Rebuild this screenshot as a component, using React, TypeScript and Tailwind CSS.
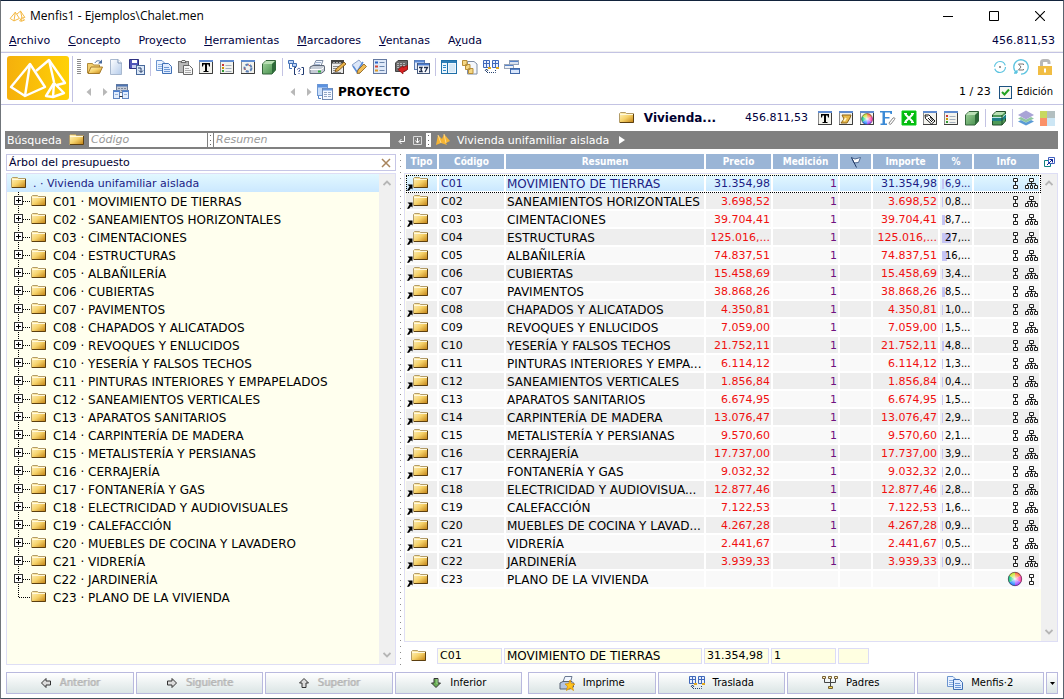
import React, { useState } from "react";

type Kids = { children?: React.ReactNode };

function Icon({ children }: Kids) {
  return (
    <svg viewBox="0 0 16 16" className="block h-4 w-4 shrink-0" aria-hidden="true">
      {children}
    </svg>
  );
}

function SharedGradients() {
  return (
    <svg className="absolute h-0 w-0" aria-hidden="true">
      <defs>
        <linearGradient id="gFolder" x1="0" y1="0" x2="1" y2="1">
          <stop offset="0" stopColor="#fff4c4" />
          <stop offset="0.5" stopColor="#f6d26a" />
          <stop offset="1" stopColor="#c07f12" />
        </linearGradient>
        <linearGradient id="gCube" x1="0" y1="0" x2="1" y2="1">
          <stop offset="0" stopColor="#a5d6a0" />
          <stop offset="1" stopColor="#3f8a46" />
        </linearGradient>
        <linearGradient id="gLogo" x1="0" y1="0" x2="1" y2="0">
          <stop offset="0" stopColor="#f5b00c" />
          <stop offset="1" stopColor="#ffd106" />
        </linearGradient>
        <linearGradient id="gPage" x1="0" y1="0" x2="1" y2="1">
          <stop offset="0" stopColor="#ffffff" />
          <stop offset="1" stopColor="#b4cbea" />
        </linearGradient>
        <radialGradient id="gWhite">
          <stop offset="0" stopColor="#ffffff" stopOpacity="0.9" />
          <stop offset="1" stopColor="#ffffff" stopOpacity="0" />
        </radialGradient>
      </defs>
    </svg>
  );
}

const folderShape = (
  <>
    <path d="M.5 12.500V3.500L1.500 2.500H6.500L7.500 3.500H14.500V12.500Z" fill="url(#gFolder)" stroke="#b39c68" />
    <path d="M1 4.500H14" stroke="#fff8dc" />
    <path d="M1 12.500H14.500V4" fill="none" stroke="#5c3f10" />
  </>
);

const FolderIcon = () => <Icon>{folderShape}</Icon>;

function LinkedFolderIcon() {
  return (
    <svg viewBox="0 0 22 16" className="block h-4 w-[22px] shrink-0" aria-hidden="true">
      <g transform="translate(7 0)">{folderShape}</g>
      <path d="M1.500 9.500H6.500V14.500L5 13.200L3 15.700H1L3.500 11.500Z" fill="#000" />
    </svg>
  );
}

function Frame({ children }: Kids) {
  return (
    <Icon>
      <rect x="1.500" y="1.500" width="13" height="13" fill="#f3f3ee" stroke="#8a8a8a" />
      <path d="M1 14.500H14.500V2" fill="none" stroke="#3c3c3c" />
      <path d="M1 2H15" stroke="#5f8bd0" strokeWidth="2" />
      {children}
    </Icon>
  );
}

const TextIcon = () => (
  <Frame>
    <path d="M4 4H12V7.500H11L10.500 5.500H9V12H10.500V13H5.500V12H7V5.500H5.500L5 7.500H4Z" fill="#000" />
  </Frame>
);
const ListIcon = () => (
  <Frame>
    <path d="M3 6H5" stroke="#c33" strokeWidth="2" />
    <path d="M3 9H5" stroke="#c90" strokeWidth="2" />
    <path d="M3 12H5" stroke="#393" strokeWidth="2" />
    <path d="M6.500 6.500H12.500M6.500 9.500H12.500M6.500 12.500H12.500" stroke="#a4aebc" />
  </Frame>
);
const CycleIcon = () => (
  <Frame>
    <circle cx="8" cy="9" r="3.500" fill="none" stroke="#5b7fb5" strokeWidth="2" strokeDasharray="3 1.500" />
    <path d="M8 5.500l2 1.500M4.500 9l1 2" stroke="#b55" />
  </Frame>
);
const ScrollIcon = () => (
  <Frame>
    <path d="M4 5H13L12 8L9 13H3L6 9Z" fill="#e8b94a" stroke="#8d6418" />
    <path d="M8 8L6 11" stroke="#fff3c0" strokeWidth="2" />
  </Frame>
);
const TagIcon = () => (
  <Frame>
    <path d="M3 5L7 5L13 11L9.500 14L3.500 8.500Z" fill="#fff" stroke="#111" />
    <path d="M6 8l4 4M8 7l3 4M4.500 6.500h1" stroke="#111" />
  </Frame>
);

function ColourBall() {
  return (
    <>
      <path d="M8 8V1A7 7 0 0 1 14 4.500Z" fill="#ff7a3c" />
      <path d="M8 8L14 4.500A7 7 0 0 1 14 11.500Z" fill="#ff48a8" />
      <path d="M8 8L14 11.500A7 7 0 0 1 8 15Z" fill="#a050ff" />
      <path d="M8 8V15A7 7 0 0 1 2 11.500Z" fill="#2d8cff" />
      <path d="M8 8L2 11.500A7 7 0 0 1 2 4.500Z" fill="#22d08a" />
      <path d="M8 8L2 4.500A7 7 0 0 1 8 1Z" fill="#c8e838" />
      <circle cx="8" cy="8" r="6" fill="url(#gWhite)" />
      <circle cx="8" cy="8" r="6.700" fill="none" stroke="#503050" strokeWidth=".7" />
    </>
  );
}
const BallIcon = () => (
  <Icon>
    <ColourBall />
  </Icon>
);
const ColourIcon = () => (
  <Frame>
    <g transform="translate(1.500 2.500) scale(.82)">
      <ColourBall />
    </g>
  </Frame>
);
const CubeIcon = () => (
  <Icon>
    <path d="M1.500 5L5 1.500H14.500V11L11 15H1.500Z" fill="url(#gCube)" stroke="#33633a" />
    <path d="M2 5L5 2H14L11 5Z" fill="#b9dfb4" />
    <path d="M11 5L14.500 1.800V11L11 14.500Z" fill="#2d6a38" />
  </Icon>
);
const SlicedCubeIcon = () => (
  <Icon>
    <path d="M1.500 5L5 1.500H14.500V11L11 15H1.500Z" fill="#4f9a58" stroke="#234d2b" />
    <path d="M2 5L5 2H14L11 5Z" fill="#b9dfb4" />
    <path d="M1 8H11L15 4.500V8L11 11H1Z" fill="#1d7f86" />
    <path d="M1 7.500H11L15 4" fill="none" stroke="#bfe6e8" />
    <path d="M11 5V15" stroke="#234d2b" />
  </Icon>
);
const OpenIcon = () => (
  <Icon>
    <path d="M.5 14V4.500H5.500L6.500 6H12.500V8" fill="#f3cf6e" stroke="#b08a3a" />
    <path d="M1 14.500L4 8H15.500L12.500 14.500Z" fill="url(#gFolder)" stroke="#a67a28" />
    <path d="M8 4C9 1.500 12 1 14 3" fill="none" stroke="#46689c" />
    <path d="M15 .5V4.500H11Z" fill="#46689c" />
  </Icon>
);
const NewIcon = () => (
  <Icon>
    <path d="M2.500 .5H10L13.500 4V15.500H2.500Z" fill="url(#gPage)" stroke="#a9b9cf" />
    <path d="M10 .5V4H13.500" fill="#fff" stroke="#7d94b5" />
  </Icon>
);
const SaveIcon = () => (
  <Icon>
    <path d="M.5 .5H9.500V9.500H.5Z" fill="#4f55b8" stroke="#2d3180" />
    <path d="M3 1H8V4H3Z" fill="#fff" />
    <path d="M3 6H7V9H3Z" fill="#c9cdf0" />
    <rect x="7.500" y="6.500" width="8" height="9" fill="#dbe8f8" stroke="#49699b" />
    <path d="M9 9H12V13M10 11.500L12 13.500L14 11.500" fill="none" stroke="#223a66" />
  </Icon>
);
const CopyIcon = () => (
  <Icon>
    <path d="M.5 1.500H6L8.500 4V11.500H.5Z" fill="#e9f2ff" stroke="#6b94cf" />
    <path d="M2 5.500H6M2 7.500H6M2 9.500H6" stroke="#8db0e0" />
    <path d="M6.500 4.500H12.500L15.500 7.500V14.500H6.500Z" fill="#e0ecff" stroke="#3f6fb4" />
    <path d="M8 8.500H13M8 10.500H14M8 12.500H14" stroke="#6c98d6" />
  </Icon>
);
const PasteIcon = () => (
  <Icon>
    <rect x="1.500" y="2.500" width="10" height="11" fill="#b9b9b9" stroke="#777" />
    <path d="M4 3.500L5 1.500H8L9 3.500Z" fill="#eee" stroke="#666" />
    <path d="M6.500 6.500H12.500L15.500 9.500V15.500H6.500Z" fill="#f6f6f6" stroke="#666" />
    <path d="M8 9.500H12M8 11.500H14M8 13.500H14" stroke="#aaa" />
  </Icon>
);
const QueryIcon = () => (
  <Icon>
    <path d="M.5 1.500H5.500V4.500H.5ZM4.500 4.500H8.500V7.500H4.500Z" fill="#bcd3f7" stroke="#4471b5" />
    <path d="M1.500 5V9.500H4" fill="none" stroke="#4471b5" />
    <path d="M8 8.500H6.500V15.500H8M13.500 8.500H15.500V15.500H13.500" fill="none" stroke="#203a70" />
    <path d="M9.500 10.500C9.500 9 12.500 9 12.300 10.500L11 12V13M11 14V15" fill="none" stroke="#3c50a0" />
  </Icon>
);
const PrinterIcon = () => (
  <Icon>
    <path d="M4.500 7L7 1.500H14L12 7Z" fill="#f2f7ff" stroke="#7e8ca4" />
    <path d="M7 3.500H12M6 5.500H11" stroke="#9fb2d0" />
    <path d="M1 8L4 6.500H15L15.500 8V12L12 14.500H1Z" fill="#c6ccd6" stroke="#5f6878" />
    <path d="M1 10.500H12L15 8.500" fill="none" stroke="#fff" />
    <path d="M9 12.500H12" stroke="#2fae3c" strokeWidth="2" />
  </Icon>
);
const PrintStarIcon = () => (
  <Icon>
    <path d="M4 7L6 1.500H13L11.500 7Z" fill="#f2f7ff" stroke="#697891" />
    <path d="M1 8L4 6.500H13L14.500 8V12L11 14H1Z" fill="#b4c4e0" stroke="#596272" />
    <path d="M11 5L12.300 8.500L16 9L13.300 11.300L14.500 15.500L11 13L7.500 15.500L8.500 11.300L6 9L9.700 8.500Z" fill="#ffc41a" stroke="#d68b00" strokeWidth=".7" />
  </Icon>
);
const EditIcon = () => (
  <Icon>
    <rect x="1.500" y="1.500" width="12" height="13" fill="#ececec" stroke="#444" />
    <path d="M1 3H14" stroke="#444" strokeWidth="3" />
    <path d="M3 3.500H12" stroke="#aaa" strokeDasharray="2 1" />
    <path d="M3 7.500H11M3 9.500H9M3 11.500H7M3 13.500H11" stroke="#888" />
    <path d="M5 12.500L6 10L14 3L16 5L8 12Z" fill="#eab44a" stroke="#70460b" strokeWidth=".8" />
  </Icon>
);
const CheckPencilIcon = () => (
  <Icon>
    <path d="M1 6L8 1L14 8L8 15Z" fill="#dbe6f8" stroke="#8aa2ca" />
    <path d="M2 7L6 13L12 3" fill="none" stroke="#5c8cd4" strokeWidth="1.500" />
    <path d="M6 14.500L7 11L13 5L15.500 7.500L9 14Z" fill="#f0bd57" stroke="#8c5f1b" strokeWidth=".8" />
  </Icon>
);
const ReportIcon = () => (
  <Icon>
    <rect x="1.500" y=".5" width="13" height="14" fill="#dfe9f8" stroke="#6479a0" />
    <path d="M3 3.500H6" stroke="#2c62c4" strokeWidth="2" />
    <path d="M3 7.500H6" stroke="#d24636" strokeWidth="2" />
    <path d="M3 11.500H6" stroke="#dc9a24" strokeWidth="2" />
    <path d="M7.500 3.500H12.500M7.500 7.500H12.500M7.500 11.500H12.500" stroke="#6c86ad" />
  </Icon>
);
const BookArrowIcon = () => (
  <Icon>
    <path d="M2.500 4L5 1.500H14.500V10L12 12.500H2.500Z" fill="#6a6a6a" stroke="#444" />
    <path d="M4 4.500H13M4 6.500H13M4 8.500H7" stroke="#b5b5b5" strokeDasharray="2 1" />
    <path d="M5 10.500L10 7V8.500L14.500 6.500V10.500L10 13V15Z" fill="#d92222" stroke="#8c0f0f" strokeWidth=".7" />
  </Icon>
);
const CalendarIcon = () => (
  <Icon>
    <rect x=".5" y="1.500" width="10" height="9" fill="#dfe9fa" stroke="#5a7ab0" />
    <path d="M1 2.500H10" stroke="#5a8ad8" strokeWidth="2" />
    <rect x="3.500" y="4.500" width="12" height="10" fill="#f7f9fd" stroke="#44577a" />
    <path d="M4 5.500H15" stroke="#4a7cd0" strokeWidth="2" />
    <path d="M5 8.500H8L7 10.500L8 12.500H5M10 8.500H13.500L11 13" fill="none" stroke="#1d2c4a" strokeWidth="1.300" />
  </Icon>
);
const PanelsIcon = () => (
  <Icon>
    <rect x=".5" y="1.500" width="15" height="13" fill="#eef6fc" stroke="#1f6fa8" />
    <path d="M1 3H15" stroke="#2f7fb8" strokeWidth="2" />
    <path d="M6.500 3V14" stroke="#1f6fa8" />
    <path d="M2 6.500H5M2 8.500H5M2 11.500H5" stroke="#2f89c8" />
    <rect x="8" y="5" width="6" height="8" fill="#d6e8f6" />
  </Icon>
);
const FoldersPageIcon = () => (
  <Icon>
    <path d="M5.500 2.500H12L15 5V15H5.500Z" fill="#f4f7fc" stroke="#7f8da4" />
    <path d="M.5 1.500H5V6.500H.5ZM3.500 5.500H8V10.500H3.500ZM6.500 9.500H11V14.500H6.500Z" fill="#f6d783" stroke="#b88e38" />
  </Icon>
);
const TransferIcon = () => (
  <Icon>
    <path d="M.5 1.500H6.500V8.500H.5ZM9.500 1.500H15.500V8.500H9.500Z" fill="#e7efff" stroke="#4068ba" />
    <path d="M3.500 1V9M12.500 1V9M1 4.500H6M10 4.500H15" stroke="#4068ba" />
    <path d="M5 9H8M13 9H16" stroke="#e3a81e" strokeWidth="2" />
    <path d="M3.500 10V13.500H12.500V11" fill="none" stroke="#26426f" strokeDasharray="1 1" />
    <path d="M2 12L3.500 10L5 12" fill="none" stroke="#26426f" />
  </Icon>
);
const CascadeIcon = () => (
  <Icon>
    <rect x="5.500" y="1.500" width="9" height="4" fill="#dbe3f0" stroke="#8f9fba" />
    <rect x=".5" y="5.500" width="9" height="4" fill="#eef2f8" stroke="#9aa5b8" />
    <rect x="6.500" y="9.500" width="9" height="5" fill="#d8e6fc" stroke="#4068a8" />
    <path d="M6 2.500H14M1 6.500H9M7 10.500H15" stroke="#5683ca" />
  </Icon>
);
const FormsIcon = () => (
  <Icon>
    <rect x="3.500" y=".5" width="11" height="8" fill="#c5cbd6" stroke="#727e92" />
    <path d="M3 1.500H15" stroke="#4e75b2" strokeWidth="2" />
    <path d="M5 4.500H14M5 6.500H14" stroke="#7c8798" strokeDasharray="2 1" />
    <rect x=".5" y="6.500" width="6" height="8" fill="#e2edfd" stroke="#5f85c0" />
    <rect x="9.500" y="6.500" width="6" height="8" fill="#e2edfd" stroke="#5f85c0" />
    <path d="M1 7.500H6M10 7.500H15" stroke="#4a80d4" />
    <path d="M2 10.500H5M11 10.500H14" stroke="#9ab2d8" />
    <path d="M6.500 12.500H9.500" stroke="#333" />
  </Icon>
);
const SheetsIcon = () => (
  <Icon>
    <rect x=".5" y=".5" width="10" height="11" fill="#c9defa" stroke="#6f98d2" />
    <path d="M1 2H10" stroke="#5c92e0" strokeWidth="3" />
    <rect x="5.500" y="4.500" width="10" height="11" fill="#f4f8ff" stroke="#6f88b0" />
    <path d="M6 5.500H15" stroke="#6b9ae0" strokeWidth="2" />
    <path d="M7 8.500H14M7 10.500H14M7 12.500H14" stroke="#92a6c4" strokeDasharray="3 1" />
    <path d="M1.500 12V14.500H4" fill="none" stroke="#5585c8" />
  </Icon>
);
const FontClipIcon = () => (
  <Icon>
    <path d="M0 1H12V4H10.500L10 2.500H5V7H9.500V8.500H5V13.500H7V15H.5V13.500H2.500V2.500H0Z" fill="#3b8ad6" />
    <path d="M9 13L13 8C14.500 7 15.500 8.500 14.500 9.500L11 14C10 15 8.500 14 9.500 12.500" fill="none" stroke="#888" />
  </Icon>
);
const SpreadsheetIcon = () => (
  <Icon>
    <rect x="1" y="1" width="14" height="14" fill="#04b910" />
    <path d="M1 1H15V15H1Z" fill="none" stroke="#08cf18" />
    <path d="M4 4L12 12M12 4L4 12" stroke="#fff" strokeWidth="2" />
    <path d="M3 3.500H6M10 3.500H13M3 12.500H6M10 12.500H13" stroke="#fff" />
  </Icon>
);
const LayersIcon = () => (
  <Icon>
    <path d="M0 11.500L8 15.500L16 11.500L13 10L8 12.500L3 10Z" fill="#5a9bd5" />
    <path d="M0 8.500L8 12.500L16 8.500L13 7L8 9.500L3 7Z" fill="#8fc7a0" />
    <path d="M0 5L8 .5L16 5L8 9.500Z" fill="#a9a4d6" />
  </Icon>
);
const TilesIcon = () => (
  <Icon>
    <path d="M1 1H8V8H1Z" fill="#c7d860" />
    <path d="M8 1H16V8H8Z" fill="#b3bfc0" />
    <path d="M1 8H8V16H1Z" fill="#fb9168" />
    <path d="M8 8H16V16H8Z" fill="#cde6f4" />
  </Icon>
);
const LockIcon = () => (
  <Icon>
    <path d="M4.500 8V3.500Q4.500 1.500 6.500 1.500H10Q12 1.500 12 3.500V5" fill="none" stroke="#b8b8b8" strokeWidth="3" />
    <path d="M1 7H15V16H1Z" fill="#f1bd43" />
    <path d="M8 9.500V13.500" stroke="#fff" strokeWidth="2" />
  </Icon>
);

const PyramidLines = ({ colour, width }: { colour: string; width: number }) => (
  <g fill="none" stroke={colour} strokeWidth={width} strokeLinejoin="round">
    <path d="M23 8L4 31L18 40L38 31Z" />
    <path d="M23 8L18 40" />
    <path d="M29 15L42 4L58 27L50 29" />
    <path d="M42 4L47 26" />
    <path d="M47 27L39 40L46 41L57 37Z" />
    <path d="M47 27L46 41" />
  </g>
);

const Arrow = ({ dir, green }: { dir: "left" | "right" | "up" | "down"; green?: boolean }) => {
  const turn = { left: 180, right: 0, up: -90, down: 90 }[dir];
  return (
    <svg viewBox="0 0 12 12" className="block h-3 w-3" aria-hidden="true">
      <g transform={`rotate(${turn} 6 6)`}>
        <path d="M1.500 4H6V1.500L10.500 6L6 10.500V8H1.500Z" fill={green ? "#68ad54" : "#dcdcdc"} stroke="#333" />
        {green ? <path d="M2 5H7" stroke="#a8dc98" /> : null}
      </g>
    </svg>
  );
};

const ParentsIcon = () => (
  <Icon>
    <path d="M.5 1.500H3.500V3.500H.5ZM6.500 1.500H9.500V3.500H6.500ZM12.500 1.500H15.500V3.500H12.500Z" fill="#fff3b8" stroke="#77603a" />
    <path d="M2.500 4V7.500H13.500V4M8.500 4V11" fill="none" stroke="#444" />
    <path d="M6.500 11.500H10.500V13.500H6.500Z" fill="#f6e04a" stroke="#77603a" />
  </Icon>
);
const OrgIcon = () => (
  <Icon>
    <path d="M6.500 3.500H10.500V6.500H6.500ZM2.500 10.500H5.500V13.500H2.500ZM7.500 10.500H9.500V13.500H7.500ZM11.500 10.500H14.500V13.500H11.500Z" fill="#fff" stroke="#222" />
    <path d="M8.500 7V10M4.500 10V8.500H12.500V10" fill="none" stroke="#222" />
  </Icon>
);
const LinkIcon = () => (
  <Icon>
    <path d="M6.500 3.500H10.500V6.500H6.500ZM6.500 10.500H10.500V13.500H6.500Z" fill="#fff" stroke="#222" />
    <path d="M8.500 7V10" stroke="#222" />
  </Icon>
);

function Nav({ label, back }: { label: string; back?: boolean }) {
  return (
    <button aria-label={label} className="flex h-4 w-[15px] items-center justify-center">
      <svg viewBox="0 0 8 8" className="h-2 w-2">
        <path d={back ? "M6 0V8L1.500 4Z" : "M2 0V8L6.500 4Z"} fill="#b8b8b8" />
      </svg>
    </button>
  );
}

const Sep = () => <span className="h-[18px] w-px shrink-0 bg-[#c3c3e3]" />;

type Tool = [string, React.ComponentType] | null;

function Tools({ items }: { items: Tool[] }) {
  return (
    <>
      {items.map((t, i) => {
        if (!t) return <Sep key={i} />;
        const Glyph = t[1];
        return (
          <button key={i} aria-label={t[0]} className="shrink-0">
            <Glyph />
          </button>
        );
      })}
    </>
  );
}

const mainTools: Tool[] = [
  ["Abrir", OpenIcon], ["Nuevo", NewIcon], ["Guardar", SaveIcon], null,
  ["Copiar", CopyIcon], ["Pegar", PasteIcon], ["Texto", TextIcon], ["Lista", ListIcon],
  ["Recalcular", CycleIcon], ["Modelo", CubeIcon], null,
  ["Consulta", QueryIcon], ["Imprimir", PrinterIcon], ["Editar", EditIcon], ["Revisar", CheckPencilIcon],
  ["Informe", ReportIcon], ["Exportar", BookArrowIcon], ["Calendario", CalendarIcon], null,
  ["Paneles", PanelsIcon], ["Carpetas", FoldersPageIcon], ["Trasladar", TransferIcon], ["Cascada", CascadeIcon],
];

const conceptTools: Tool[] = [
  ["Texto", TextIcon], ["Pliego", ScrollIcon], ["Color", ColourIcon], ["Fuente", FontClipIcon],
  ["Hoja", SpreadsheetIcon], ["Etiqueta", TagIcon], ["Lista", ListIcon], ["Modelo", CubeIcon], null,
  ["Secciones", SlicedCubeIcon], null, ["Capas", LayersIcon], ["Mosaico", TilesIcon],
];

type Row = { code: string; name: string; short?: string; price?: string; pct?: string };

const rows: Row[] = [
  { code: "C01", name: "MOVIMIENTO DE TIERRAS", price: "31.354,98", pct: "6,9..." },
  { code: "C02", name: "SANEAMIENTOS HORIZONTALES", price: "3.698,52", pct: "0,8..." },
  { code: "C03", name: "CIMENTACIONES", price: "39.704,41", pct: "8,7..." },
  { code: "C04", name: "ESTRUCTURAS", price: "125.016,...", pct: "27,..." },
  { code: "C05", name: "ALBAÑILERÍA", price: "74.837,51", pct: "16,..." },
  { code: "C06", name: "CUBIERTAS", price: "15.458,69", pct: "3,4..." },
  { code: "C07", name: "PAVIMENTOS", price: "38.868,26", pct: "8,5..." },
  { code: "C08", name: "CHAPADOS Y ALICATADOS", price: "4.350,81", pct: "1,0..." },
  { code: "C09", name: "REVOQUES Y ENLUCIDOS", price: "7.059,00", pct: "1,5..." },
  { code: "C10", name: "YESERÍA Y FALSOS TECHOS", price: "21.752,11", pct: "4,8..." },
  { code: "C11", name: "PINTURAS INTERIORES Y EMPAPELADOS", short: "PINTURAS INTERIORES Y EMPA...", price: "6.114,12", pct: "1,3..." },
  { code: "C12", name: "SANEAMIENTOS VERTICALES", price: "1.856,84", pct: "0,4..." },
  { code: "C13", name: "APARATOS SANITARIOS", price: "6.674,95", pct: "1,5..." },
  { code: "C14", name: "CARPINTERÍA DE MADERA", price: "13.076,47", pct: "2,9..." },
  { code: "C15", name: "METALISTERÍA Y PERSIANAS", price: "9.570,60", pct: "2,1..." },
  { code: "C16", name: "CERRAJERÍA", price: "17.737,00", pct: "3,9..." },
  { code: "C17", name: "FONTANERÍA Y GAS", price: "9.032,32", pct: "2,0..." },
  { code: "C18", name: "ELECTRICIDAD Y AUDIOVISUALES", short: "ELECTRICIDAD Y AUDIOVISUA...", price: "12.877,46", pct: "2,8..." },
  { code: "C19", name: "CALEFACCIÓN", price: "7.122,53", pct: "1,6..." },
  { code: "C20", name: "MUEBLES DE COCINA Y LAVADERO", short: "MUEBLES DE COCINA Y LAVAD...", price: "4.267,28", pct: "0,9..." },
  { code: "C21", name: "VIDRERÍA", price: "2.441,67", pct: "0,5..." },
  { code: "C22", name: "JARDINERÍA", price: "3.939,33", pct: "0,9..." },
  { code: "C23", name: "PLANO DE LA VIVIENDA" },
];

const Columns = () => (
  <colgroup>
    <col className="w-[33px]" />
    <col className="w-[67px]" />
    <col />
    <col className="w-[67px]" />
    <col className="w-[67px]" />
    <col className="w-[33px]" />
    <col className="w-[67px]" />
    <col className="w-[34px]" />
    <col className="w-[67px]" />
  </colgroup>
);

function Scrollbar() {
  return (
    <div className="flex w-4 shrink-0 flex-col items-center justify-between bg-[#f0f0f0] py-1.5">
      <svg viewBox="0 0 8 6" className="h-1.5 w-2"><path d="M.5 5L4 1.500L7.500 5" fill="none" stroke="#b5b5b5" strokeWidth="1.800" /></svg>
      <svg viewBox="0 0 8 6" className="h-1.5 w-2"><path d="M.5 1L4 4.500L7.500 1" fill="none" stroke="#b5b5b5" strokeWidth="1.800" /></svg>
    </div>
  );
}

function TreePanel() {
  return (
    <section className="flex w-[390px] shrink-0 flex-col gap-0.5">
      <div className="flex h-[17px] items-center justify-between border border-[#c6c6e6] pr-1 pl-0.5">
        <h2 className="text-[#000033]">Árbol del presupuesto</h2>
        <button aria-label="Cerrar árbol">
          <svg viewBox="0 0 10 10" className="h-2.5 w-2.5"><path d="M1 1L9 9M9 1L1 9" stroke="#a8845c" strokeWidth="1.500" /></svg>
        </button>
      </div>
      <div className="flex flex-1 border border-[#dedef5] bg-[#ffffee]">
        <ul className="flex-1">
          <li className="flex h-[18px] items-center gap-1.5 bg-linear-to-b from-[#e2f8ff] to-[#cbe8ff] pl-1 text-[#1c1c84]">
            <FolderIcon />
            <span className="pt-0.5">. · Vivienda unifamiliar aislada</span>
          </li>
          {rows.map((r, i) => (
            <li key={r.code} className="flex h-[18px] items-center pl-[7px]">
              <svg viewBox="0 0 17 18" className="block h-[18px] w-[17px] shrink-0" aria-hidden="true">
                <path d={i === 22 ? "M4.500 0V9" : "M4.500 0V18"} stroke="#000" strokeDasharray="1 1" />
                <path d="M5 9.500H17" stroke="#000" strokeDasharray="1 1" />
                {i < 22 ? (
                  <>
                    <rect x=".5" y="4.500" width="8" height="8" fill="#fff" stroke="#333" />
                    <path d="M2 8.500H7M4.500 6V11" stroke="#000" />
                  </>
                ) : null}
              </svg>
              <FolderIcon />
              <span className="pt-0.5 pl-1.5 text-xs leading-4 whitespace-nowrap">{`${r.code} · ${r.name}`}</span>
            </li>
          ))}
        </ul>
        <Scrollbar />
      </div>
    </section>
  );
}

const headCell = "h-[15px] border-r-2 border-white bg-[#9ab5d6] p-0 text-center font-bold leading-[15px]";

function GridPanel() {
  const [selected, setSelected] = useState("C01");
  return (
    <section className="flex min-w-0 flex-1 flex-col">
      <div className="flex h-[19px] items-start pl-0.5">
        <table className="min-w-0 flex-1 table-fixed border-separate border-spacing-0 font-['DejaVu_Sans_Condensed','DejaVu_Sans',sans-serif] text-[10px] text-white">
          <Columns />
          <thead>
            <tr>
              <th className={headCell}>Tipo</th>
              <th className={headCell}>Código</th>
              <th className={headCell}>Resumen</th>
              <th className={headCell}>Precio</th>
              <th className={headCell}>Medición</th>
              <th className={headCell} aria-label="Marca">
                <svg viewBox="0 0 12 12" className="mx-auto block h-3 w-3" aria-hidden="true">
                  <path d="M1.500 1.500L5 3L10.500 1.500L8.500 6.500L4 7Z" fill="#fff" stroke="#4c6690" />
                  <path d="M1.500 1.500L6.500 11.500" stroke="#223a66" />
                </svg>
              </th>
              <th className={headCell}>Importe</th>
              <th className={headCell}>%</th>
              <th className={headCell}>Info</th>
            </tr>
          </thead>
        </table>
        <button aria-label="Abrir en ventana" className="flex w-[17px] justify-center pt-0.5">
          <svg viewBox="0 0 12 12" className="h-3 w-3">
            <path d="M.5 4.500H6.500V10.500H.5Z" fill="#fff" stroke="#108080" />
            <path d="M4.500 1.500H10.500V7.500H4.500Z" fill="#fff" stroke="#4060c0" />
            <path d="M3 9L8.500 3.500M5.500 3.500H8.500V6.500" fill="none" stroke="#0a1e90" />
          </svg>
        </button>
      </div>
      <div className="flex flex-1 border border-[#dedef5] bg-[#ffffee]">
        <div className="min-w-0 flex-1 pt-px pl-px">
          <table className="w-full table-fixed border-separate border-spacing-0 bg-white">
            <Columns />
            <tbody>
              {rows.map((r, i) => {
                const sel = r.code === selected;
                const tone = sel
                  ? "bg-linear-to-b from-[#e2f8ff] to-[#cbe8ff] text-[#1c1c84]"
                  : i % 2
                    ? "bg-[#eeeeee]"
                    : "bg-[#f9f9f9]";
                const cell = `h-[18px] overflow-hidden border-r-2 border-b-2 border-white p-0 whitespace-nowrap ${tone}`;
                const words = `${cell} pt-0.5 leading-[14px]`;
                const money = sel ? "text-right" : "text-right text-[#f01010]";
                return (
                  <tr
                    key={r.code}
                    onClick={() => setSelected(r.code)}
                    className={sel ? "outline-1 -outline-offset-1 outline-dotted outline-black" : ""}
                  >
                    <td className={cell}><LinkedFolderIcon /></td>
                    <td className={`${words} pl-0.5`}>{r.code}</td>
                    <td className={`${words} pl-px text-xs`}>{r.short ?? r.name}</td>
                    <td className={`${words} ${money} pr-px`}>{r.price}</td>
                    <td className={`${words} pr-px text-right text-[#701080]`}>{r.price ? "1" : ""}</td>
                    <td className={cell} />
                    <td className={`${words} ${money} pr-px`}>{r.price}</td>
                    <td className={cell}>
                      {r.pct ? (
                        <span className="relative block h-4 pt-px text-[10px] leading-[15px]">
                          <span
                            className="absolute top-1 left-0.5 block h-2.5 bg-[#c4c4f4]"
                            style={{ width: `${parseFloat(r.pct.replace(",", "."))}%` }}
                          />
                          <span className="relative pl-[5px]">{r.pct}</span>
                        </span>
                      ) : null}
                    </td>
                    <td className={cell}>
                      <span className="flex justify-end">
                        {r.price ? <LinkIcon /> : <BallIcon />}
                        {r.price ? <OrgIcon /> : <LinkIcon />}
                      </span>
                    </td>
                  </tr>
                );
              })}
            </tbody>
          </table>
        </div>
        <Scrollbar />
      </div>
      <div className="flex h-[23px] items-center gap-0.5 pt-1 pl-[7px]">
        <FolderIcon />
        <input aria-label="Código" defaultValue="C01" className="ml-2 h-4 w-[65px] border border-[#dcdcf6] bg-[#ffffe1] px-0.5 outline-none" />
        <input aria-label="Resumen" defaultValue="MOVIMIENTO DE TIERRAS" className="h-4 w-[198px] border border-[#dcdcf6] bg-[#ffffe1] px-0.5 text-xs outline-none" />
        <input aria-label="Precio" defaultValue="31.354,98" className="h-4 w-[65px] border border-[#dcdcf6] bg-[#ffffe1] px-0.5 outline-none" />
        <input aria-label="Medición" defaultValue="1" className="h-4 w-[65px] border border-[#dcdcf6] bg-[#ffffe1] px-0.5 outline-none" />
        <input aria-label="Marca" className="h-4 w-[31px] border border-[#dcdcf6] bg-[#ffffe1] outline-none" />
      </div>
    </section>
  );
}

function BarButton({ icon, label, disabled }: { icon: React.ReactNode; label: string; disabled?: boolean }) {
  return (
    <button
      disabled={disabled}
      className="flex h-[22px] flex-1 items-center justify-center gap-2 border border-[#b9b9de] bg-linear-to-b from-white to-[#dbe5e5] text-[10px] text-black disabled:text-[#b4b4b4] disabled:[text-shadow:1px_0_#c4c4c4]"
    >
      {icon}
      <span>{label}</span>
    </button>
  );
}

const DotGrip = () => (
  <span className="flex h-3.5 w-[5px] flex-col items-center justify-between bg-white py-0.5">
    <i className="h-px w-px bg-[#666]" />
    <i className="h-px w-px bg-[#666]" />
    <i className="h-px w-px bg-[#666]" />
  </span>
);

const menus = [
  ["", "A", "rchivo"], ["", "C", "oncepto"], ["Pro", "y", "ecto"], ["", "H", "erramientas"],
  ["", "M", "arcadores"], ["", "V", "entanas"], ["A", "y", "uda"],
];

export default function App() {
  return (
    <div className="flex min-h-screen flex-col border border-t-[#12233c] border-r-[#5a6470] border-b-[#45525e] border-l-[#70757a] bg-white font-['DejaVu_Sans',Verdana,sans-serif] text-[11px] leading-4 text-black">
      <SharedGradients />

      <header className="flex h-[29px] items-center justify-between">
        <h1 className="flex items-center gap-1 pl-2 font-['Open_Sans','Noto_Sans',sans-serif] text-xs">
          <svg viewBox="0 0 62 44" className="h-3 w-[17px]" aria-hidden="true">
            <PyramidLines colour="#f2b53c" width={3.5} />
          </svg>
          Menfis1 - Ejemplos\Chalet.men
        </h1>
        <div className="flex">
          <button aria-label="Minimizar" className="flex h-7 w-[46px] items-center justify-center">
            <svg viewBox="0 0 10 10" className="h-2.5 w-2.5"><path d="M0 5.500H10" stroke="#000" /></svg>
          </button>
          <button aria-label="Maximizar" className="flex h-7 w-[46px] items-center justify-center">
            <svg viewBox="0 0 10 10" className="h-2.5 w-2.5"><path d="M.5 .5H9.500V9.500H.5Z" fill="none" stroke="#000" /></svg>
          </button>
          <button aria-label="Cerrar" className="flex h-7 w-[46px] items-center justify-center">
            <svg viewBox="0 0 10 10" className="h-2.5 w-2.5"><path d="M0 0L10 10M10 0L0 10" stroke="#000" strokeWidth="1.100" /></svg>
          </button>
        </div>
      </header>

      <nav className="flex h-[22px] items-center gap-[18px] border-b border-[#f0f0f0] pt-px pr-2 pl-2 text-[#000040]">
        {menus.map(([before, key, after]) => (
          <button key={before + key + after}>
            {before}
            <u>{key}</u>
            {after}
          </button>
        ))}
        <span className="ml-auto">456.811,53</span>
      </nav>

      <div className="flex h-[53px] border-y border-[#c3c3e3] pt-[3px] pr-2 pl-1.5">
        <svg viewBox="0 0 62 44" className="block h-11 w-[62px]" aria-label="Menfis">
          <rect width="62" height="44" rx="3" fill="url(#gLogo)" />
          <PyramidLines colour="#fff" width={2.4} />
        </svg>
        <span className="ml-0.5 h-[46px] w-0.5 border-r border-[#c3c3e3]" />
        <div className="flex min-w-0 flex-1 flex-col gap-1.5 pl-1">
          <div className="flex h-[18px] items-center gap-[5px] pt-1">
            <span className="mr-px h-4 w-1 bg-[repeating-linear-gradient(to_bottom,#8c8c8c_0_1px,transparent_1px_2px)]" />
            <Tools items={mainTools} />
          </div>
          <div className="flex h-6 items-center">
            <div className="flex w-[204px] items-center gap-px pl-1">
              <Nav label="Concepto anterior" back />
              <Nav label="Concepto siguiente" />
              <button aria-label="Esquema"><FormsIcon /></button>
            </div>
            <div className="flex items-center gap-px pl-1">
              <Nav label="Vista anterior" back />
              <Nav label="Vista siguiente" />
              <SheetsIcon />
              <strong className="pl-1 text-xs">PROYECTO</strong>
            </div>
          </div>
        </div>
        <div className="flex flex-col items-end gap-1.5">
          <div className="flex h-[18px] items-center gap-1.5 pt-1 pr-0.5">
            <button aria-label="Actualizar">
              <svg viewBox="0 0 14 14" className="h-3.5 w-3.5"><circle cx="7" cy="7" r="5.500" fill="none" stroke="#5cc4e0" strokeWidth="1.200" strokeDasharray="15 2" /><circle cx="7" cy="7" r="1" fill="#777" /></svg>
            </button>
            <button aria-label="Recalcular totales">
              <svg viewBox="0 0 16 16" className="h-4 w-4"><path d="M4 14A7.200 7.200 0 1 1 8 15.200M4 14V11M4 14H1" fill="none" stroke="#5cc4e0" strokeWidth="1.300" /><path d="M10.500 6V5H5.500L8 8L5.500 11H10.500V10" fill="none" stroke="#777" /></svg>
            </button>
            <button aria-label="Bloqueo" className="pl-0.5"><LockIcon /></button>
          </div>
          <div className="flex h-6 items-center gap-2 pr-0.5">
            <span>1 / 23</span>
            <label className="flex items-center gap-[5px] text-[10px]">
              <span className="grid h-[13px] w-[13px] place-items-center">
                <input type="checkbox" defaultChecked className="peer col-start-1 row-start-1 h-[13px] w-[13px] appearance-none border border-[#1c5180] bg-[#f8f8f4]" />
                <svg viewBox="0 0 9 9" className="pointer-events-none invisible col-start-1 row-start-1 h-[9px] w-[9px] peer-checked:visible"><path d="M1 4L3.500 6.500L8 1.500" fill="none" stroke="#21a121" strokeWidth="2" /></svg>
              </span>
              Edición
            </label>
          </div>
        </div>
      </div>

      <div className="flex h-[26px] items-center justify-end gap-[5px] pr-2">
        <FolderIcon />
        <strong className="pl-1 text-xs text-[#000030]">Vivienda...</strong>
        <span className="pr-1 pl-6 text-[#000040]">456.811,53</span>
        <Tools items={conceptTools} />
      </div>

      <div className="mr-[5px] ml-1 flex h-[18px] items-center bg-[#808080] text-white">
        <span className="w-16 pt-0.5 pl-0.5">Búsqueda</span>
        <FolderIcon />
        <input aria-label="Código" placeholder="Código" className="ml-1 h-3.5 w-[118px] bg-white pl-0.5 text-black italic outline-none placeholder:text-[#999]" />
        <span className="mx-px flex"><DotGrip /></span>
        <input aria-label="Resumen" placeholder="Resumen" className="h-3.5 w-[176px] bg-white pl-0.5 text-black italic outline-none placeholder:text-[#999]" />
        <button aria-label="Buscar" className="ml-2">
          <svg viewBox="0 0 8 8" className="h-2 w-2"><path d="M6.500 0V5.500H1.500M3.500 3L1 5.500L3.500 8" fill="none" stroke="#fff" /></svg>
        </button>
        <button aria-label="Opciones de búsqueda" className="mr-1 ml-[7px]">
          <svg viewBox="0 0 9 9" className="h-[9px] w-[9px]"><path d="M.5 .5H8.500V8.500H.5Z" fill="none" stroke="#d8d8d8" /><path d="M4.500 2V6.500M2.500 4.500L4.500 7L6.500 4.500" fill="none" stroke="#fff" /></svg>
        </button>
        <DotGrip />
        <svg viewBox="0 0 16 16" className="mx-1 h-4 w-4" aria-hidden="true">
          <path d="M1 13L3 3L7 7L9 2L15 9L11 11L12 13L6 11Z" fill="#f5b433" />
          <path d="M3 3L6 11M9 2L11 11" stroke="#ffe0a0" strokeWidth=".8" />
        </svg>
        <a href="#vivienda" className="pt-0.5 pl-0.5">Vivienda unifamiliar aislada</a>
        <svg viewBox="0 0 6 8" className="ml-2.5 h-2 w-1.5" aria-hidden="true"><path d="M0 0L6 4L0 8Z" fill="#fff" /></svg>
      </div>

      <main className="mr-[5px] ml-[5px] flex flex-1 pt-[5px]">
        <TreePanel />
        <div className="w-2 shrink-0 bg-[repeating-linear-gradient(to_bottom,#8c8c8c_0_1px,transparent_1px_6px)] bg-[length:1px_100%] bg-center bg-no-repeat" />
        <GridPanel />
      </main>

      <footer className="flex gap-0.5 px-[5px] pt-[7px] pb-1">
        <BarButton disabled icon={<Arrow dir="left" />} label="Anterior" />
        <BarButton disabled icon={<Arrow dir="right" />} label="Siguiente" />
        <BarButton disabled icon={<Arrow dir="up" />} label="Superior" />
        <BarButton icon={<Arrow dir="down" green />} label="Inferior" />
        <span className="w-0.5" />
        <BarButton icon={<PrintStarIcon />} label="Imprime" />
        <BarButton icon={<TransferIcon />} label="Traslada" />
        <BarButton icon={<ParentsIcon />} label="Padres" />
        <BarButton icon={<CopyIcon />} label="Menfis·2" />
        <button aria-label="Más ventanas" className="flex h-[22px] w-3 items-center justify-center border border-[#b9b9de] bg-linear-to-b from-white to-[#dbe5e5]">
          <svg viewBox="0 0 5 3" className="h-[3px] w-[5px]"><path d="M0 0H5L2.500 3Z" fill="#000" /></svg>
        </button>
      </footer>
    </div>
  );
}
